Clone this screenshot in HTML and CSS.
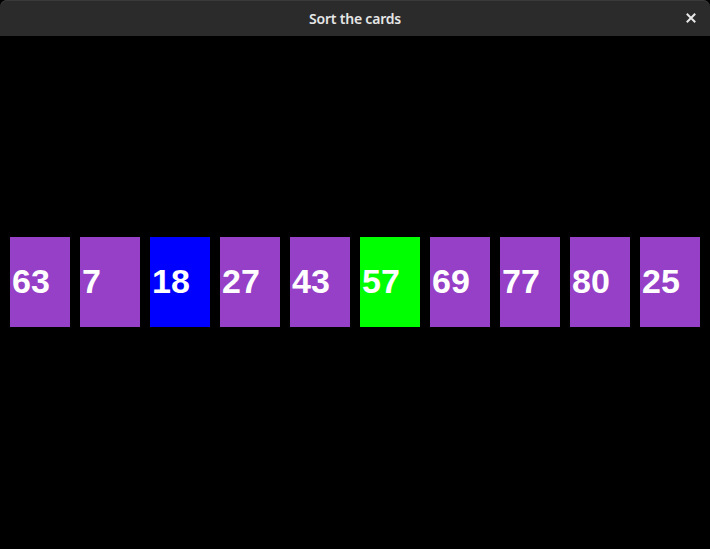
FILE: index.html
```html
<!DOCTYPE html>
<html>
<head>
<meta charset="utf-8">
<link rel="stylesheet" href="styles.css">
</head>
<body>
<div class="window">
  <div class="titlebar">
    <span class="title">Sort the cards</span>
    <span class="close">
      <svg width="10" height="10" viewBox="0 0 10 10"><path d="M1.5 1.5 L8.5 8.5 M8.5 1.5 L1.5 8.5" stroke="#e8e8e8" stroke-width="2" stroke-linecap="square"/></svg>
    </span>
  </div>
  <div class="canvas">
    <div class="row">
      <div class="card purple">63</div>
      <div class="card purple">7</div>
      <div class="card blue">18</div>
      <div class="card purple">27</div>
      <div class="card purple">43</div>
      <div class="card green">57</div>
      <div class="card purple">69</div>
      <div class="card purple">77</div>
      <div class="card purple">80</div>
      <div class="card purple">25</div>
    </div>
  </div>
</div>
</body>
</html>
```
FILE: styles.css
```css
html, body {
  margin: 0;
  padding: 0;
  background: #000;
  width: 710px;
  height: 549px;
  overflow: hidden;
}
.window {
  width: 710px;
  height: 549px;
  display: flex;
  flex-direction: column;
}
.titlebar {
  height: 36px;
  flex: none;
  background: #2b2b2b;
  border-radius: 7px 7px 0 0;
  box-shadow: inset 0 1px 0 #3a3a3a;
  position: relative;
  display: flex;
  align-items: center;
  justify-content: center;
}
.title {
  font-family: "Noto Sans", "DejaVu Sans", sans-serif;
  font-weight: 600;
  font-size: 14px;
  color: #e6e6e6;
  letter-spacing: -0.2px;
}
.close {
  position: absolute;
  right: 14px;
  top: 13px;
  width: 10px;
  height: 10px;
  display: flex;
}
.canvas {
  flex: 1;
  background: #000;
  padding: 201px 0 0 10px;
}
.row {
  display: flex;
  gap: 10px;
}
.card {
  width: 60px;
  height: 90px;
  display: flex;
  align-items: center;
  padding-left: 2px;
  box-sizing: border-box;
  font-family: "Liberation Sans", Arial, sans-serif;
  font-weight: bold;
  font-size: 34px;
  color: #fff;
  padding-bottom: 2px;
}
.purple { background: #9640c8; }
.blue { background: #0000ff; }
.green { background: #00ff00; }
```
